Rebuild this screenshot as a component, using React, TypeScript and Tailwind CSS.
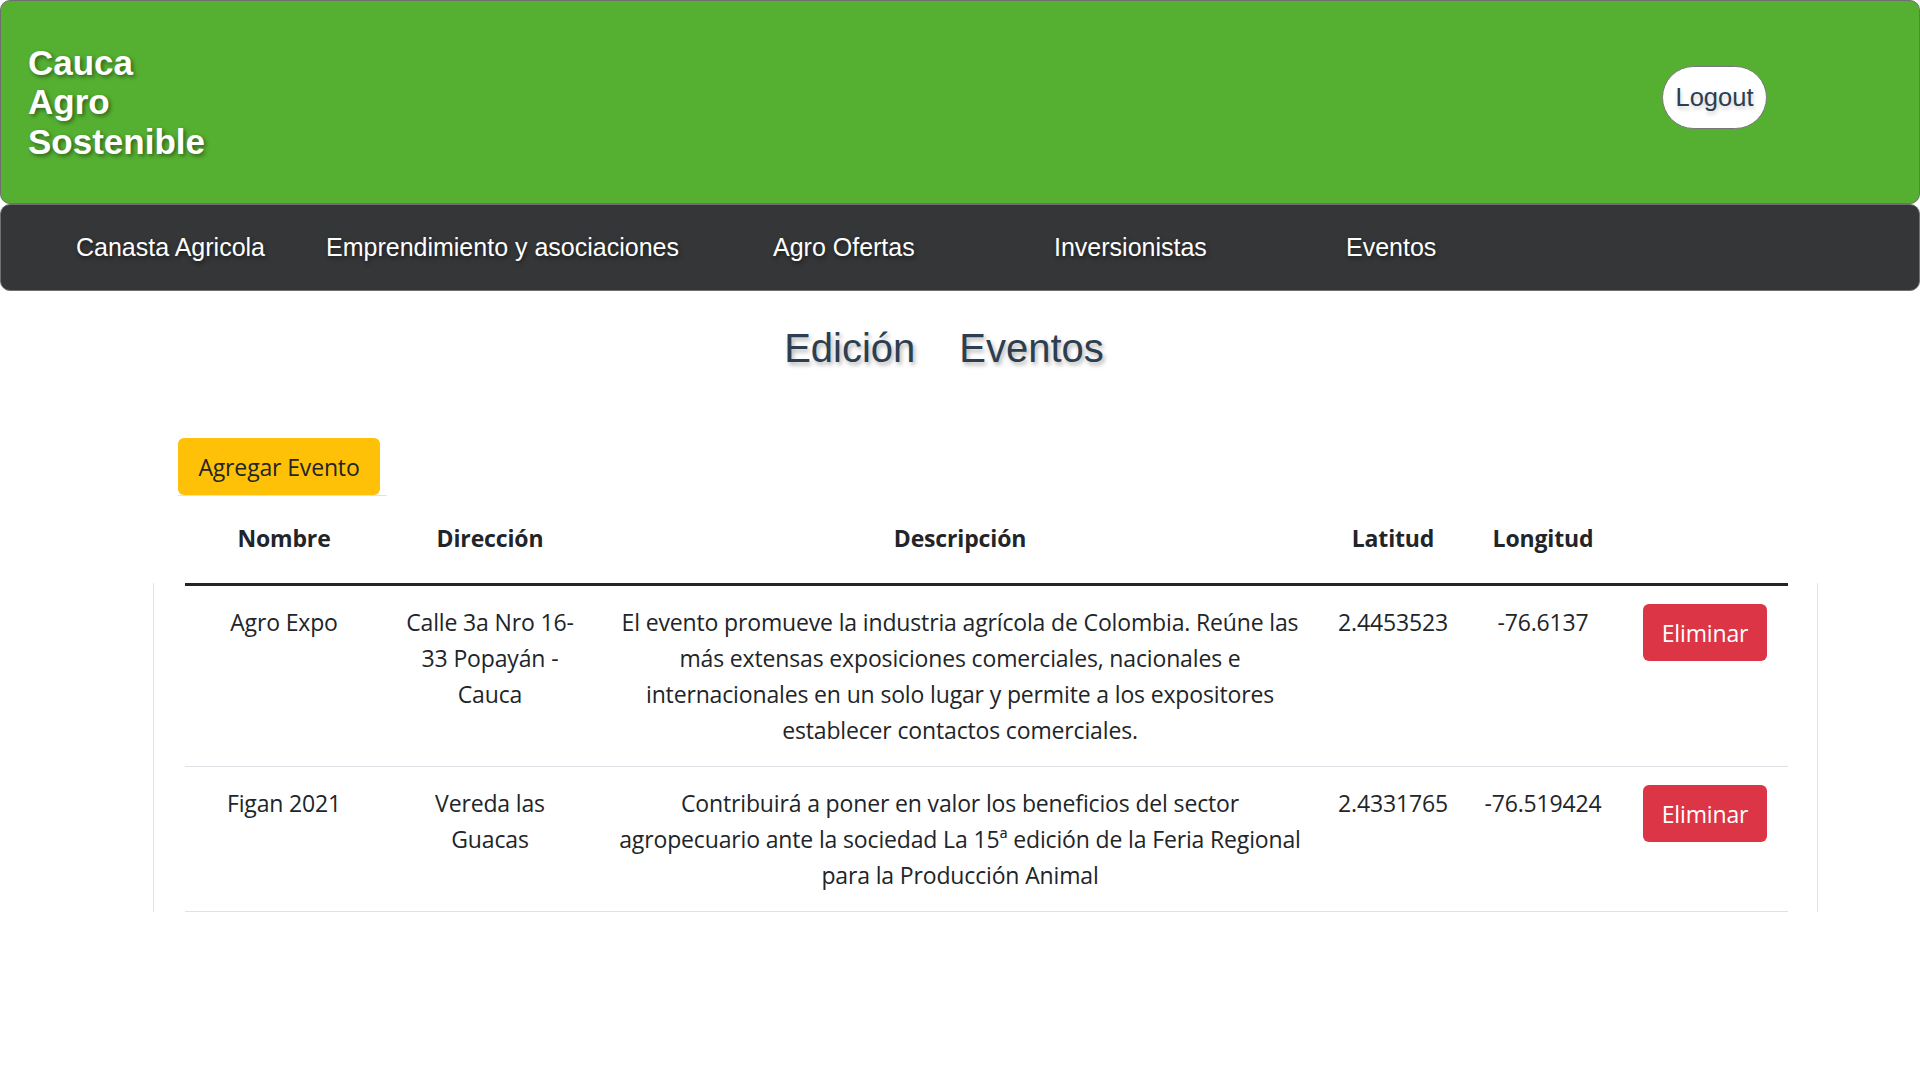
import React from 'react'

const body = { fontFamily: '"Open Sans", "Noto Sans", sans-serif' }
const arial = { fontFamily: '"Liberation Sans", Arial, sans-serif' }

const navItems = [
  { label: 'Canasta Agricola', w: 'w-[250px]' },
  { label: 'Emprendimiento y asociaciones', w: 'w-[447px]' },
  { label: 'Agro Ofertas', w: 'w-[281px]' },
  { label: 'Inversionistas', w: 'w-[292px]' },
  { label: 'Eventos', w: '' },
]

interface Evento {
  nombre: string
  direccion: string[]
  descripcion: string[]
  latitud: string
  longitud: string
}

const eventos: Evento[] = [
  {
    nombre: 'Agro Expo',
    direccion: ['Calle 3a Nro 16-', '33 Popayán -', 'Cauca'],
    descripcion: [
      'El evento promueve la industria agrícola de Colombia. Reúne las',
      'más extensas exposiciones comerciales, nacionales e',
      'internacionales en un solo lugar y permite a los expositores',
      'establecer contactos comerciales.',
    ],
    latitud: '2.4453523',
    longitud: '-76.6137',
  },
  {
    nombre: 'Figan 2021',
    direccion: ['Vereda las', 'Guacas'],
    descripcion: [
      'Contribuirá a poner en valor los beneficios del sector',
      'agropecuario ante la sociedad La 15ª edición de la Feria Regional',
      'para la Producción Animal',
    ],
    latitud: '2.4331765',
    longitud: '-76.519424',
  },
]

const cols = 'grid grid-cols-[198px_214px_726px_140px_160px_164px]'

function Lines({ lines }: { lines: string[] }) {
  return (
    <>
      {lines.map((l, i) => (
        <div key={i} className="whitespace-nowrap">
          {l}
        </div>
      ))}
    </>
  )
}

export default function App() {
  return (
    <div className="min-h-screen bg-white" style={body}>
      <header
        className="flex h-[204px] items-center justify-between rounded-[10px] border border-[#6f6f6f] bg-[#55b031] pl-[27px] pr-[152px]"
        style={arial}
      >
        <h1 className="text-[35px] font-bold leading-[39.5px] text-white [text-shadow:2px_2px_4px_rgba(0,0,0,0.45)]">
          Cauca
          <br />
          Agro
          <br />
          Sostenible
        </h1>
        <button className="mb-[9px] flex h-[63px] w-[105px] items-center justify-center rounded-full border border-[#777] bg-white text-[25.5px] text-[#2c3e50] [text-shadow:1px_3px_4px_rgba(0,0,0,0.2)]">
          Logout
        </button>
      </header>

      <nav
        className="flex h-[87px] items-center rounded-[10px] border border-[#6f6f6f] bg-[#353638] pl-[75px]"
        style={arial}
      >
        {navItems.map((n) => (
          <a
            key={n.label}
            className={`${n.w} shrink-0 text-[25px] text-white [text-shadow:1px_2px_4px_rgba(0,0,0,0.5)]`}
          >
            {n.label}
          </a>
        ))}
      </nav>

      <div
        className="mt-[33px] flex h-[48px] items-center justify-center gap-[44px] pr-[32px] text-[40px] leading-[48px] text-[#2c3e50] [text-shadow:2px_3px_4px_rgba(0,0,0,0.3)]"
        style={arial}
      >
        <span>Edición</span>
        <span>Eventos</span>
      </div>

      <div className="ml-[153px] mt-[66px] w-[1665px] text-[23px] leading-[36px] tracking-[-0.15px] text-[#212529]">
        <div className="ml-[25px] w-[209px] border-b border-[#dee2e6]">
          <button className="h-[57px] w-[202px] rounded-[6px] bg-[#ffc107] text-[#212529]">
            Agregar Evento
          </button>
        </div>

        <div className={`${cols} ml-[32px] h-[87px] items-center pb-[3px] text-center font-bold`}>
          <div>Nombre</div>
          <div>Dirección</div>
          <div>Descripción</div>
          <div>Latitud</div>
          <div>Longitud</div>
          <div />
        </div>

        <div className="border-x border-[#dee2e6] pl-[31px] pr-[29px]">
          <div className="h-[3px] bg-[#212529]" />
          {eventos.map((e) => (
            <div key={e.nombre} className={`${cols} border-b border-[#dee2e6] py-[18px] text-center`}>
              <div>{e.nombre}</div>
              <div>
                <Lines lines={e.direccion} />
              </div>
              <div>
                <Lines lines={e.descripcion} />
              </div>
              <div>{e.latitud}</div>
              <div>{e.longitud}</div>
              <div className="flex justify-center">
                <button className="h-[57px] w-[124px] rounded-[6px] bg-[#dc3545] text-white">
                  Eliminar
                </button>
              </div>
            </div>
          ))}
        </div>
      </div>
    </div>
  )
}
